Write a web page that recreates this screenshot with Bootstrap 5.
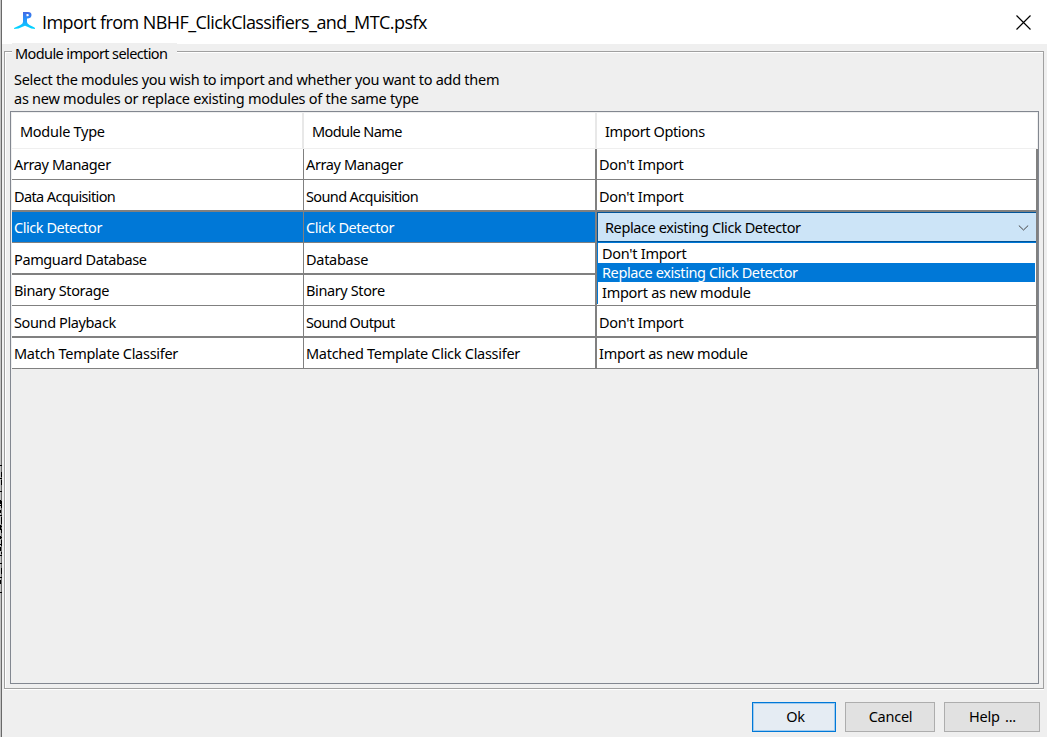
<!DOCTYPE html>
<html lang="en">
<head>
<meta charset="utf-8">
<title>Import modules</title>
<link href="https://cdn.jsdelivr.net/npm/bootstrap@5.3.0/dist/css/bootstrap.min.css" rel="stylesheet">
<style>
body{width:1047px;height:737px;overflow:hidden;background:#efefef;color:#000;font-family:"Noto Sans",sans-serif;font-size:14.5px;line-height:19px;letter-spacing:-.28px}
.edge{width:2px;background:linear-gradient(90deg,#c4c4c4 1px,#696969 1px)}
.edge svg{top:465px;left:0}
.titlebar{height:44px;background:#fff;padding:0 16px 0 11px}
.logo{margin:-2px -3px 0 0}
.caption{font:18px/24px "Open Sans",sans-serif;letter-spacing:-.57px;margin:0 0 0 8px}
.group{margin:7px 3px 0 2px;height:638px;border:1px solid #a0a0a0;box-shadow:inset 1px 1px #fff,0 1px #fff;padding:0 4px 4px 5px}
.legend-text{background:#efefef;height:19px;width:165px;margin:-9px 0 0 2px;padding-left:3px;line-height:21px;letter-spacing:-.6px}
.intro{margin:8px 0 3px 4px}
.pane{border:1px solid #828790;padding:1px 0 0 1px}
.c1{width:292px}.c2{width:293px}.c3{width:441px}
.head{height:36px;background:#fff;border-bottom:1px solid #efefef;line-height:37px;letter-spacing:-.38px}
.head>div{padding-left:8px}
.head .c1{border-right:2px solid #e8e8e8;letter-spacing:-.28px}
.head .c2{border-right:2px solid #e8e8e8;letter-spacing:-.6px}
.head .c3{border-right:1px solid #efefef}
.line{height:31px;line-height:31px}
.line>div{background:#fff;border-bottom:1px solid #808080;border-right:1px solid #808080;padding-left:2px}
.line>.c2,.line>.c3{border-right-width:2px}
.line:nth-child(odd){height:32px;line-height:32px}
.line:nth-child(odd)>div{border-bottom-width:2px}
.line.chosen>.c1,.line.chosen>.c2{background:#0078d7;color:#fff;letter-spacing:-.45px}
.line.chosen>.c3{padding:0;border-bottom:0}
.tight{letter-spacing:-.62px}
.snug{letter-spacing:-.38px}
.combo{height:31px;border:solid #005499;border-width:1px 0 1px 1px;box-shadow:inset 0 -1px #005499;border-bottom-color:#0078d7;background:#cce4f7;padding:0 7px 0 7px;letter-spacing:-.4px}
.popup{top:31px;left:0;width:439px;height:61px;background:#fff;border-left:1px solid #0078d7;line-height:20px}
.popup div{padding-left:4px;height:20px}
.popup .on{height:19px;margin-right:1px;line-height:18px;background:#0078d7;color:#fff;letter-spacing:-.4px}
.push{height:30px;border:1px solid #adadad;border-radius:0;background:#e1e1e1;color:#000;font-size:14.5px;line-height:26px;padding:0 0 2px 1px;letter-spacing:-.25px}
.push.main{border-color:#0078d7;box-shadow:inset 0 0 0 1px #9fcbef;background:#e5ecf3;padding-left:3px}
.actions{padding:13px 7px 0 0;gap:9px}
</style>
<script src="https://cdn.jsdelivr.net/npm/bootstrap@5.3.0/dist/js/bootstrap.bundle.min.js"></script>
</head>
<body class="d-flex">
<div class="edge position-relative flex-shrink-0">
<svg class="position-absolute" width="2" height="130"><path d="M0 .5h2M0 13.500h2M0 26.500h2M0 40.500h2M0 50.500h2M0 61.500h2M0 72.500h2M0 79.500h2M0 90.500h2M0 98.500h2M0 112.500h2M0 127.500h2M1.500 7v5M1.500 15v5M.5 35v4M1.500 36v7M.5 45v3M1.500 52v7M.5 60v5M1.500 64v4M.5 71v3M1.500 75v6M.5 82v4M1.500 87v2M1.500 103v6M.5 115v4" stroke="#000"/></svg>
</div>
<main class="flex-grow-1 d-flex flex-column">
<header class="titlebar d-flex align-items-center">
<svg class="logo" width="24" height="20" viewBox="0 0 24 20"><defs><linearGradient id="g" x2="0" y2="1"><stop offset="0" stop-color="#4468e4"/><stop offset=".5" stop-color="#229cff"/><stop offset="1" stop-color="#00dcff"/></linearGradient></defs><path fill="url(#g)" fill-rule="evenodd" d="M10 1h5q3.500 0 3.500 3T15 7.500h-1V11q0 1.500 2.500 3l5 2.500q.7.500.5 1.500-4 0-7-2l-3-1.300L9 16q-3 2-8 2 0-1 .5-1.200L7 14.200q3-1.500 3-3.200ZM13.500 3v2.300h1q1.300 0 1.300-1.100T14.500 3Z"/></svg>
<span class="caption">Import from NBHF_ClickClassifiers_and_MTC.psfx</span>
<svg class="ms-auto" width="15" height="15"><path d="m.5.5 14 14M14.500.5l-14 14" stroke="#000" stroke-width="1.2"/></svg>
</header>
<section class="group d-flex flex-column">
<div class="legend-text flex-shrink-0">Module import selection</div>
<div class="intro text-nowrap">Select the modules you wish to import and whether you want to add them<br><span style="letter-spacing:-.25px">as new modules or replace existing modules of the same type</span></div>
<div class="pane flex-grow-1">
<div class="head d-flex"><div class="c1">Module Type</div><div class="c2">Module Name</div><div class="c3">Import Options</div></div>
<div class="line d-flex"><div class="c1 snug">Array Manager</div><div class="c2 snug">Array Manager</div><div class="c3">Don't Import</div></div>
<div class="line d-flex"><div class="c1 tight">Data Acquisition</div><div class="c2 tight">Sound Acquisition</div><div class="c3">Don't Import</div></div>
<div class="line d-flex chosen"><div class="c1">Click Detector</div><div class="c2">Click Detector</div><div class="c3 position-relative">
<div class="combo d-flex align-items-center justify-content-between"><span>Replace existing Click Detector</span><svg width="11" height="6"><path d="m.8.5 4.700 4.500 4.700-4.500" fill="none" stroke="#444"/></svg></div>
<div class="popup position-absolute"><div>Don't Import</div><div class="on">Replace existing Click Detector</div><div>Import as new module</div></div>
</div></div>
<div class="line d-flex"><div class="c1 snug">Pamguard Database</div><div class="c2">Database</div><div class="c3"></div></div>
<div class="line d-flex"><div class="c1 snug">Binary Storage</div><div class="c2 snug">Binary Store</div><div class="c3"></div></div>
<div class="line d-flex"><div class="c1 snug">Sound Playback</div><div class="c2 tight">Sound Output</div><div class="c3">Don't Import</div></div>
<div class="line d-flex"><div class="c1">Match Template Classifer</div><div class="c2">Matched Template Click Classifer</div><div class="c3">Import as new module</div></div>
</div>
</section>
<footer class="actions d-flex justify-content-end">
<button class="btn push main" style="width:84px">Ok</button><button class="btn push" style="width:90px">Cancel</button><button class="btn push" style="width:96px;word-spacing:2px">Help ...</button>
</footer>
</main>
</body>
</html>
